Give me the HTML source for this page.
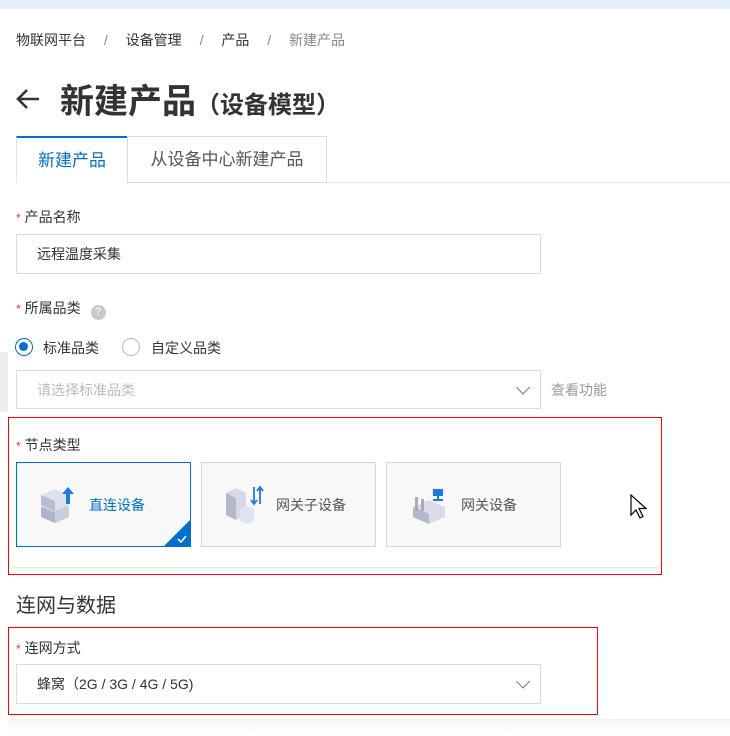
<!DOCTYPE html>
<html><head><meta charset="utf-8"><style>
*{margin:0;padding:0;box-sizing:border-box}
body{width:730px;height:736px;position:relative;background:#fff;font-family:"Liberation Sans","Noto Sans CJK SC",sans-serif;color:#333;overflow:hidden}
.a{position:absolute;white-space:nowrap}
.lbl{font-size:14px;color:#333}
.lbl b{color:#e33;font-weight:normal;font-size:12px;margin-right:4px}
.inp{position:absolute;border:1px solid #dcdcdc;background:#fff;font-size:14px;padding-left:20px;display:flex;align-items:center}
.card{position:absolute;top:462px;width:175px;height:85px;background:#f8f8f8;border:1px solid #d6d6d6;font-size:14px;color:#555;display:flex;align-items:center;padding-left:22px}
.card span{margin-left:12px}
.chev{position:absolute;right:12px;top:50%;width:10px;height:10px;border-right:1.6px solid #777;border-bottom:1.6px solid #777;transform:translateY(-75%) rotate(45deg)}
</style></head><body>
<div class="a" style="left:0;top:0;width:730px;height:9px;background:#e4f0fb"></div>
<div class="a" style="left:16px;top:30px;font-size:14px;color:#333">物联网平台 <span style="color:#888;margin:0 14px">/</span> 设备管理 <span style="color:#888;margin:0 14px">/</span> 产品 <span style="color:#888;margin:0 14px">/</span> <span style="color:#888">新建产品</span></div>
<svg class="a" style="left:15px;top:88px" width="26" height="22" viewBox="0 0 26 22"><path d="M24 11H3M12 2L3 11l9 9" stroke="#333" stroke-width="2.6" fill="none"/></svg>
<div class="a" style="left:60px;top:74px;font-size:34px;font-weight:bold;color:#333">新建产品<span style="font-size:24px">（设备模型）</span></div>
<div class="a" style="left:16px;top:136px;width:111px;height:47px;border-top:2px solid #0070cc;border-left:1px solid #e5e5e5;color:#0070cc;font-size:17px;text-align:center;line-height:45px">新建产品</div>
<div class="a" style="left:127px;top:136px;width:200px;height:47px;border:1px solid #ddd;color:#555;font-size:17px;text-align:center;line-height:45px;background:#fff">从设备中心新建产品</div>
<div class="a" style="left:326px;top:182px;width:404px;height:1px;background:#e5e5e5"></div>
<div class="a lbl" style="left:16px;top:207px"><b>*</b>产品名称</div>
<div class="inp" style="left:16px;top:234px;width:525px;height:40px;color:#333">远程温度采集</div>
<div class="a lbl" style="left:16px;top:298px"><b>*</b>所属品类 <span style="display:inline-block;width:15px;height:15px;border-radius:50%;background:#c8c8c8;color:#fff;font-size:11px;text-align:center;line-height:15px;margin-left:6px;vertical-align:-2px">?</span></div>
<div class="a" style="left:15px;top:338px;width:18px;height:18px;border-radius:50%;border:1.5px solid #0070cc;background:#fff"><div style="position:absolute;left:3px;top:3px;width:9px;height:9px;border-radius:50%;background:#0070cc"></div></div>
<div class="a lbl" style="left:43px;top:338px">标准品类</div>
<div class="a" style="left:122px;top:338px;width:18px;height:18px;border-radius:50%;border:1px solid #bbb"></div>
<div class="a lbl" style="left:151px;top:338px">自定义品类</div>
<div class="a" style="left:0;top:352px;width:8px;height:60px;background:#eee"></div>
<div class="inp" style="left:16px;top:370px;width:525px;height:39px;color:#bbb">请选择标准品类<i class="chev"></i></div>
<div class="a" style="left:551px;top:380px;font-size:14px;color:#999">查看功能</div>
<div class="a" style="left:8px;top:417px;width:654px;height:158px;border:1px solid #f00"></div>
<div class="a lbl" style="left:16px;top:435px"><b>*</b>节点类型</div>
<div class="card" style="left:16px;border-color:#0070cc;color:#0070cc;overflow:hidden">
<svg width="38" height="40" viewBox="0 0 38 40"><path d="M2 22l14-6 14 6v10l-14 6-14-6z" fill="#c9cde0"/><path d="M2 22l14 6v10l-14-6z" fill="#aeb3c8"/><path d="M2 10l14-6 14 6v10l-14 6-14-6z" fill="#dde0ee"/><path d="M2 10l14 6v10l-14-6z" fill="#b9bdd2"/><path d="M29 2l6 7h-4v10h-4V9h-4z" fill="#1a7be0"/></svg>
<span>直连设备</span>
<div style="position:absolute;right:0;bottom:0;width:0;height:0;border-left:26px solid transparent;border-bottom:26px solid #0070cc"></div>
<svg style="position:absolute;right:3px;bottom:3px" width="10" height="8" viewBox="0 0 10 8"><path d="M1 4l3 3 5-6" stroke="#fff" stroke-width="1.6" fill="none"/></svg>
</div>
<div class="card" style="left:201px">
<svg width="40" height="40" viewBox="0 0 40 40"><path d="M2 8l10-5 10 5v22l-10 5-10-5z" fill="#d5d9ea"/><path d="M2 8l10 5v22l-10-5z" fill="#b3b8cd"/><path d="M16 24l7-3 7 3v12l-7 3-7-3z" fill="#e0e3f0"/><path d="M30 2v16M27 15l3 4 3-4M36 19V3M33 6l3-4 3 4" stroke="#1a7be0" stroke-width="1.8" fill="none"/></svg>
<span>网关子设备</span></div>
<div class="card" style="left:386px">
<svg width="40" height="40" viewBox="0 0 40 40"><path d="M4 22l16-7 16 7v10l-16 7-16-7z" fill="#d8dbea"/><path d="M4 22l16 7v10l-16-7z" fill="#b3b8cd"/><rect x="6" y="12" width="3" height="14" fill="#aab"/><rect x="12" y="14" width="3" height="12" fill="#aab"/><rect x="24" y="4" width="10" height="7" fill="#1a7be0"/><rect x="28" y="11" width="2" height="3" fill="#1a7be0"/><rect x="24" y="14" width="10" height="2" fill="#1a7be0"/></svg>
<span>网关设备</span></div>
<div class="a" style="left:12px;top:567px;width:648px;height:1px;background:#e8e8e8"></div>
<svg class="a" style="left:630px;top:494px" width="18" height="26" viewBox="0 0 18 26"><path d="M1 1v20l5-5 4 8 3-1.5-4-8h7z" fill="#fff" stroke="#000" stroke-width="1.2"/></svg>
<div class="a" style="left:16px;top:589px;font-size:20px;color:#333">连网与数据</div>
<div class="a" style="left:8px;top:627px;width:590px;height:88px;border:1px solid #f00"></div>
<div class="a lbl" style="left:16px;top:638px"><b>*</b>连网方式</div>
<div class="inp" style="left:16px;top:664px;width:525px;height:40px;color:#333">蜂窝（2G / 3G / 4G / 5G)<i class="chev"></i></div>
<div class="a" style="left:8px;top:719px;width:722px;height:17px;background:linear-gradient(#eee,#f8f8f8 3px,#fff)"></div>
</body></html>
